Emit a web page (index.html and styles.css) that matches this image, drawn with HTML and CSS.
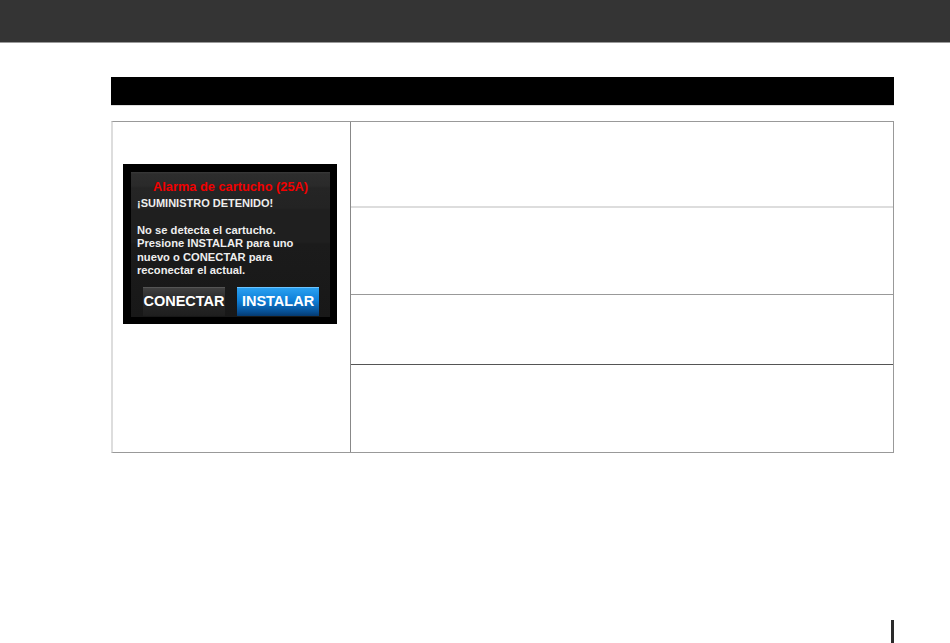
FILE: index.html
```html
<!DOCTYPE html>
<html lang="es">
<head>
  <meta charset="UTF-8">
  <meta name="viewport" content="width=device-width, initial-scale=1.0">
  <title>Alarma de cartucho</title>
  <link rel="stylesheet" href="styles.css">
</head>
<body>

  <div class="top-bar"></div>

  <div class="content">
    <div class="section-bar"></div>

    <!-- Tabla de la alarma -->
    <div class="alarm-table">
      <div class="screen-cell">
        <div class="screen">
          <div class="screen-panel">
            <p class="screen-title">Alarma de cartucho (25A)</p>
            <p class="screen-status">¡SUMINISTRO DETENIDO!</p>
            <p class="screen-text">No se detecta el cartucho.<br>Presione INSTALAR para uno<br>nuevo o CONECTAR para<br>reconectar el actual.</p>
            <div class="screen-buttons">
              <span class="screen-btn btn-dark">CONECTAR</span>
              <span class="screen-btn btn-blue">INSTALAR</span>
            </div>
          </div>
        </div>
      </div>

      <div class="rows">
        <div class="row row-1"></div>
        <div class="row row-2"></div>
        <div class="row row-3"></div>
        <div class="row row-4"></div>
      </div>
    </div>
  </div>

  <div class="page-mark"></div>

</body>
</html>
```

FILE: styles.css
```css
* {
  margin: 0;
  padding: 0;
  box-sizing: border-box;
}

body {
  font-family: "Liberation Sans", Arial, sans-serif;
  background-color: #fff;
  width: 950px;
  height: 643px;
  position: relative;
  overflow: hidden;
}

.top-bar {
  height: 43px;
  background-color: #343434;
  border-bottom: 1px solid #9a9a9a;
}

.content {
  margin-left: 111px;
  width: 783px;
  padding-top: 34px;
}

.section-bar {
  height: 29px;
  background-color: #000;
  border-bottom: 1px solid #ddd;
}

.alarm-table {
  margin-top: 15px;
  display: grid;
  grid-template-columns: 238px 1fr;
  border-top: 1px solid #999;
  border-right: 1px solid #999;
  border-bottom: 1px solid #999;
  border-left: 2px solid #ddd;
  height: 332px;
}

.screen-cell {
  border-right: 1px solid #888;
  padding: 42px 0 0 10px;
}

.screen {
  width: 214px;
  height: 160px;
  background-color: #000;
  padding: 8px 7px 7px 8px;
}

.screen-panel {
  height: 100%;
  background: linear-gradient(to bottom, #3a3a3a 0, #2d2d2d 2px, #2a2a2a 14px, #252525 16px, #232323 36px, #1f1f1f 38px, #1f1f1f 70px, #1b1b1b 72px, #181818 100%);
  padding: 7px 0 0 6px;
  color: #fff;
}

.screen-title {
  color: #f00000;
  font-size: 12.8px;
  font-weight: bold;
  text-align: center;
  line-height: 15px;
  margin-left: -6px;
}

.screen-status {
  font-size: 11px;
  font-weight: bold;
  line-height: 14px;
  margin-top: 2px;
  color: #eee;
}

.screen-text {
  font-size: 11.2px;
  font-weight: bold;
  line-height: 13.4px;
  margin-top: 14px;
  color: #eee;
}

.screen-buttons {
  display: flex;
  gap: 12px;
  margin-top: 9px;
  padding-left: 6px;
}

.screen-btn {
  display: block;
  width: 82px;
  height: 29px;
  font-size: 14.5px;
  font-weight: bold;
  text-align: center;
  color: #fff;
}

.btn-dark {
  background: linear-gradient(to bottom, #404040, #2a2a2a 40%, #1e1e1e);
  border-top: 1px solid #555;
  line-height: 27px;
}

.btn-blue {
  background: linear-gradient(to bottom, #2aa0f0, #0e7fd8 45%, #074f93 85%, #053a70);
  border-top: 1px solid #6cc4ff;
  line-height: 27px;
}

.rows {
  display: flex;
  flex-direction: column;
}

.row-1 {
  border-bottom: 2px solid #ddd;
  height: 86px;
}

.row-2 {
  border-bottom: 1px solid #999;
  height: 87px;
}

.row-3 {
  border-bottom: 1px solid #555;
  height: 70px;
}

.row-4 {
  flex: 1;
}

.page-mark {
  position: absolute;
  left: 891px;
  top: 620px;
  width: 3px;
  height: 23px;
  background-color: #2a2a2a;
}
```
